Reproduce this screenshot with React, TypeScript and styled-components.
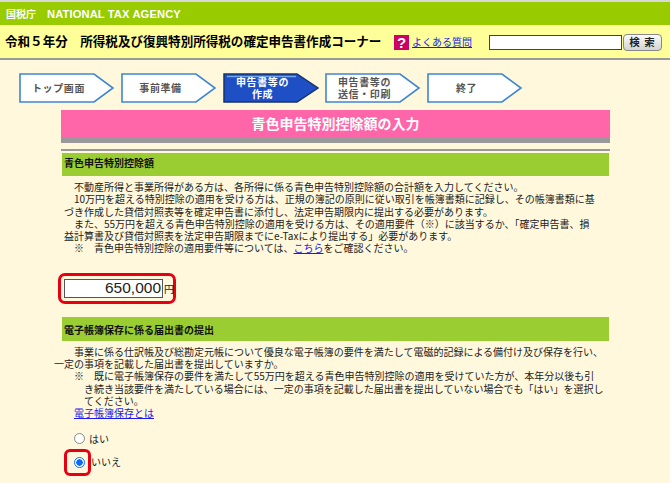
import { FC } from 'react';
import styled, { createGlobalStyle } from 'styled-components';

const GlobalStyle = createGlobalStyle`
  html, body {
    margin: 0;
    padding: 0;
    background: #fff8dc;
  }
  body {
    width: 670px;
    height: 483px;
    overflow: hidden;
    font-family: 'Noto Sans CJK JP', 'Liberation Sans', sans-serif;
    color: #222;
  }
`;

const steps = [
  { lines: ['トップ画面'] },
  { lines: ['事前準備'] },
  { lines: ['申告書等の', '作成'], active: true },
  { lines: ['申告書等の', '送信・印刷'] },
  { lines: ['終了'] },
];

const Step: FC<{ lines: string[]; active?: boolean }> = ({ lines, active }) => (
  <StepBox>
    <StepShape viewBox="0 0 96 30">
      {active ? (
        <>
          <path d="M1 1H74L95 15L74 29H1Z" fill="#1f4fc4" stroke="#17336f" strokeWidth="1.5" />
          <path d="M4 3.5H73" stroke="#6fa8f0" strokeWidth="1.5" />
        </>
      ) : (
        <path d="M1 1H75L94 15L75 29H1Z" fill="#fff" stroke="#3f86d0" strokeWidth="1.6" />
      )}
    </StepShape>
    <StepLabel $active={active}>
      {lines.map((line) => (
        <span key={line}>{line}</span>
      ))}
    </StepLabel>
  </StepBox>
);

const App: FC = () => (
  <Page>
    <GlobalStyle />
    <AgencyBar>
      <AgencyJa>国税庁</AgencyJa>
      <AgencyEn>NATIONAL TAX AGENCY</AgencyEn>
    </AgencyBar>
    <TitleBar>
      <PageTitle>令和５年分　所得税及び復興特別所得税の確定申告書作成コーナー</PageTitle>
      <HelpIcon>?</HelpIcon>
      <HelpLink href="#">よくある質問</HelpLink>
      <SearchInput type="text" readOnly />
      <SearchButton type="button">検 索</SearchButton>
    </TitleBar>
    <Steps>
      {steps.map((step) => (
        <Step key={step.lines.join('')} lines={step.lines} active={step.active} />
      ))}
    </Steps>
    <Main>
      <PinkTitle>青色申告特別控除額の入力</PinkTitle>
      <Rule />
      <SectionHead>青色申告特別控除額</SectionHead>
      <Body>
        <Indented>不動産所得と事業所得がある方は、各所得に係る青色申告特別控除額の合計額を入力してください。</Indented>
        <Indented>
          10万円を超える特別控除の適用を受ける方は、正規の簿記の原則に従い取引を帳簿書類に記録し、その帳簿書類に基
          <br />
          づき作成した貸借対照表等を確定申告書に添付し、法定申告期限内に提出する必要があります。
        </Indented>
        <Indented>
          また、55万円を超える青色申告特別控除の適用を受ける方は、その適用要件（※）に該当するか、「確定申告書、損
          <br />
          益計算書及び貸借対照表を法定申告期限までにe-Taxにより提出する」必要があります。
        </Indented>
        <Note>
          ※　青色申告特別控除の適用要件等については、<TextLink href="#">こちら</TextLink>をご確認ください。
        </Note>
      </Body>
      <AmountOutline>
        <AmountInput type="text" value="650,000" readOnly />
        <Unit>円</Unit>
      </AmountOutline>
      <SectionHeadLower>電子帳簿保存に係る届出書の提出</SectionHeadLower>
      <Body>
        <Indented>
          事業に係る仕訳帳及び総勘定元帳について優良な電子帳簿の要件を満たして電磁的記録による備付け及び保存を行い、
          <br />
          <Flush>一定の事項を記載した届出書を提出していますか。</Flush>
        </Indented>
        <Note>
          ※　既に電子帳簿保存の要件を満たして55万円を超える青色申告特別控除の適用を受けていた方が、本年分以後も引
          <br />
          き続き当該要件を満たしている場合には、一定の事項を記載した届出書を提出していない場合でも「はい」を選択し
          <br />
          てください。
        </Note>
        <Indented>
          <TextLink href="#">電子帳簿保存とは</TextLink>
        </Indented>
      </Body>
      <Choices>
        <Choice>
          <RadioSlot>
            <Radio />
          </RadioSlot>
          はい
        </Choice>
        <Choice>
          <RadioOutline>
            <Radio $checked />
          </RadioOutline>
          いいえ
        </Choice>
      </Choices>
    </Main>
  </Page>
);

const Page = styled.div`
  width: 670px;
  height: 483px;
  overflow: hidden;
  padding-top: 2px;
  box-sizing: border-box;
  background: linear-gradient(#d8d8d8 2px, #fff8dc 2px);
`;

const AgencyBar = styled.div`
  display: flex;
  align-items: center;
  height: 23px;
  padding-left: 6px;
  background: #99cc00;
  color: #fff;
`;

const AgencyJa = styled.span`
  width: 41px;
  font-size: 10px;
  font-weight: 700;
`;

const AgencyEn = styled.span`
  font-family: 'Liberation Sans', sans-serif;
  font-size: 11.2px;
  font-weight: 700;
  letter-spacing: 0.1px;
`;

const TitleBar = styled.div`
  display: flex;
  align-items: center;
  height: 32px;
  margin-top: 1px;
  padding-left: 5px;
  background: #ffff99;
  border-bottom: 2px solid #999;
`;

const PageTitle = styled.h1`
  width: 389px;
  margin: 0 0 3px;
  font-size: 12.55px;
  font-weight: 700;
  color: #000;
  white-space: nowrap;
`;

const HelpIcon = styled.span`
  display: flex;
  align-items: center;
  justify-content: center;
  width: 15px;
  height: 15px;
  background: #cc0066;
  color: #fff;
  font-family: 'Liberation Sans', sans-serif;
  font-size: 15px;
  font-weight: 700;
`;

const HelpLink = styled.a`
  width: 77px;
  margin: 0 0 1px 3px;
  font-size: 10px;
  color: #1a1aee;
  white-space: nowrap;
`;

const SearchInput = styled.input`
  width: 133px;
  height: 15px;
  padding: 0;
  box-sizing: border-box;
  border: 1px solid #444;
  background: #fff;
`;

const SearchButton = styled.button`
  width: 39px;
  height: 17px;
  margin-left: 1px;
  padding: 0;
  border: 1px solid #888;
  border-radius: 4px;
  background: linear-gradient(#fafafa, #d4d4d4);
  color: #222;
  font-family: inherit;
  font-size: 10.5px;
  font-weight: 700;
  line-height: 1;
  letter-spacing: 1px;
`;

const Steps = styled.div`
  display: flex;
  gap: 6px;
  height: 30px;
  margin: 13px 0 7px 19px;
`;

const StepBox = styled.div`
  position: relative;
  width: 96px;
  height: 30px;
`;

const StepShape = styled.svg`
  position: absolute;
  inset: 0;
  width: 100%;
  height: 100%;
`;

const StepLabel = styled.div<{ $active?: boolean }>`
  position: relative;
  display: flex;
  flex-direction: column;
  align-items: center;
  justify-content: center;
  width: 79px;
  height: 29px;
  color: ${({ $active }) => ($active ? '#fff' : '#555')};
  font-size: 10px;
  font-weight: 700;
  line-height: 11.5px;
  letter-spacing: 0.6px;
  white-space: nowrap;
`;

const Main = styled.main`
  width: 549px;
  margin-left: 61px;
`;

const PinkTitle = styled.h2`
  height: 28px;
  margin: 0;
  background: #ff66aa;
  border-bottom: 5px solid #999;
  color: #fff;
  font-size: 14px;
  font-weight: 700;
  line-height: 26px;
  text-align: center;
`;

const Rule = styled.div`
  height: 2px;
  margin-top: 6px;
  background: #999;
`;

const SectionHead = styled.h3`
  height: 23px;
  margin: 2px 1px 0;
  padding-left: 2px;
  background: #9acd32;
  color: #111;
  font-size: 10px;
  font-weight: 700;
  line-height: 20px;
`;

const SectionHeadLower = styled(SectionHead)`
  height: 24px;
  margin-top: 13px;
  line-height: 25px;
`;

const Body = styled.div`
  margin: 5px 1px 0;
  padding-left: 2px;
  font-size: 10px;
  line-height: 12.3px;
  white-space: nowrap;
`;

const Indented = styled.p`
  margin: 0;
  text-indent: 1em;
`;

const Flush = styled.span`
  margin-left: -1em;
`;

const Note = styled.p`
  margin: 0;
  padding-left: 20px;
  text-indent: -10px;
`;

const TextLink = styled.a`
  color: #1a1aee;
  text-decoration: underline;
`;

const AmountOutline = styled.div`
  display: flex;
  align-items: center;
  width: 109px;
  height: 25px;
  margin: 18px 0 0 -3px;
  padding: 0 0 0 3px;
  border: 3px solid #e60012;
  border-radius: 7px;
`;

const AmountInput = styled.input`
  width: 99px;
  height: 19px;
  padding: 0 1px 0 0;
  box-sizing: border-box;
  border: 1px solid #555;
  background: #fff;
  color: #222;
  font-family: 'Liberation Sans', sans-serif;
  font-size: 15.5px;
  text-align: right;
`;

const Unit = styled.span`
  margin-left: 1px;
  font-size: 10px;
`;

const Choices = styled.div`
  margin: 7px 0 0 3px;
  font-size: 10px;
`;

const Choice = styled.label`
  display: flex;
  align-items: center;
  height: 23px;
`;

const RadioSlot = styled.span`
  display: flex;
  align-items: center;
  box-sizing: border-box;
  width: 25px;
  height: 23px;
  padding-left: 10px;
`;

const RadioOutline = styled(RadioSlot)`
  width: 27px;
  height: 27px;
  margin-top: 2px;
  padding-left: 7px;
  border: 3px solid #e60012;
  border-radius: 6px;
`;

const Radio = styled.span<{ $checked?: boolean }>`
  display: block;
  flex: none;
  box-sizing: border-box;
  width: 11px;
  height: 11px;
  border-radius: 50%;
  border: 1px solid ${({ $checked }) => ($checked ? '#0a6cff' : '#888')};
  background: ${({ $checked }) =>
    $checked ? 'radial-gradient(circle, #0a6cff 0 3px, #fff 3.4px)' : '#fff'};
`;

export default App;
